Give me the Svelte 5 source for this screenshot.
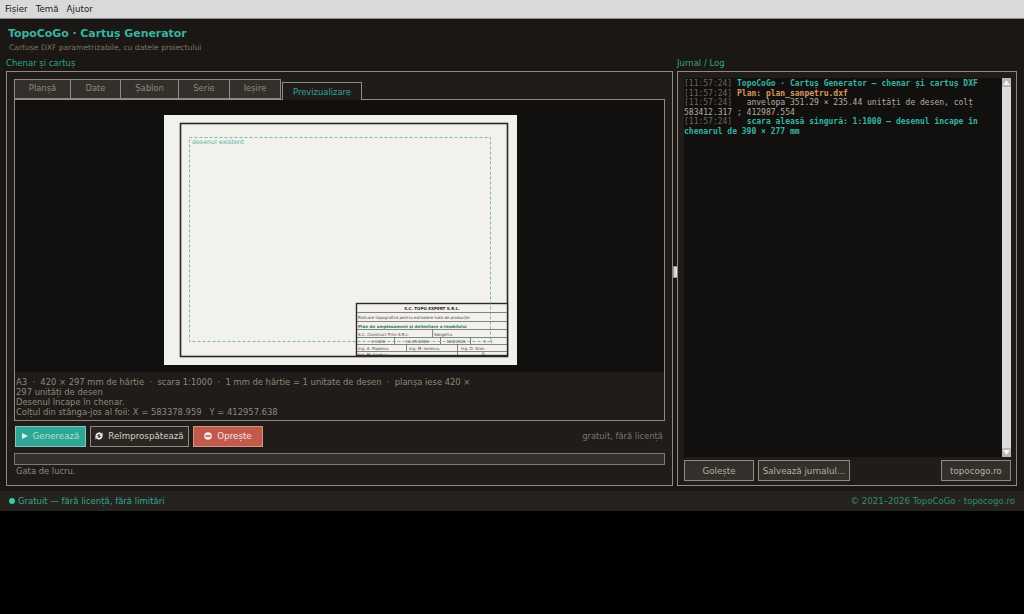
<script lang="ts">
  const tabs = ['Planșă', 'Date', 'Șablon', 'Serie', 'Ieșire', 'Previzualizare'];
  let activeTab = $state('Previzualizare');
</script>

<div class="window">
  <nav class="menubar">
    <span>Fișier</span>
    <span>Temă</span>
    <span>Ajutor</span>
  </nav>

  <header class="header">
    <h1>TopoCoGo · Cartuș Generator</h1>
    <p>Cartușe DXF parametrizabile, cu datele proiectului</p>
  </header>

  <main class="panes">
    <section class="pane left">
      <div class="pane-label">Chenar și cartuș</div>
      <div class="frame left-frame">
        <div class="tabs">
          {#each tabs as tab}
            <button class="tab" class:active={activeTab === tab} onclick={() => (activeTab = tab)}>{tab}</button>
          {/each}
        </div>
        <div class="tab-body">
          <div class="canvas">
            <svg class="sheet" width="353" height="250" viewBox="0 0 353 250">
              <rect x="16.500" y="8.500" width="327" height="233" fill="none" stroke="#2a2825" stroke-width="1.600" />
              <text x="28" y="29" class="note">desenul existent</text>

              <g class="block">
                <rect x="192.500" y="188.500" width="151" height="52" fill="#f3f1ec" stroke="#2a2825" stroke-width="1.400" />
                <line x1="193" y1="197.500" x2="343" y2="197.500" />
                <line x1="193" y1="206.500" x2="343" y2="206.500" />
                <line x1="193" y1="214.500" x2="343" y2="214.500" />
                <line x1="193" y1="222.500" x2="343" y2="222.500" />
                <line x1="193" y1="229.500" x2="343" y2="229.500" />
                <line x1="193" y1="236.500" x2="343" y2="236.500" />
                <line x1="268.500" y1="214" x2="268.500" y2="222" />
                <line x1="230.500" y1="222" x2="230.500" y2="229" />
                <line x1="276.500" y1="222" x2="276.500" y2="229" />
                <line x1="306.500" y1="222" x2="306.500" y2="229" />
                <line x1="242.500" y1="229" x2="242.500" y2="236" />
                <line x1="293.500" y1="229" x2="293.500" y2="240" />
                <text x="268" y="194.500" class="t c b">S.C. TOPO EXPERT S.R.L.</text>
                <text x="194" y="203.500" class="t">Ridicare topografică pentru extindere hală de producție</text>
                <text x="194" y="212.500" class="t b teal">Plan de amplasament și delimitare a imobilului</text>
                <text x="194" y="220.500" class="t">S.C. Construct Prim S.R.L.</text>
                <text x="270" y="220.500" class="t">Sângetru</text>
                <text x="214" y="228" class="t c">1:1000</text>
                <text x="253" y="228" class="t c">16-05-2026</text>
                <text x="292" y="228" class="t c">184/2026</text>
                <text x="324" y="228" class="t c">1 : 1</text>
                <text x="194" y="235" class="t">ing. A. Popescu</text>
                <text x="245" y="235" class="t">ing. M. Ionescu</text>
                <text x="297" y="235" class="t">ing. D. Stan</text>
                <text x="194" y="241" class="t">ing. M. Ionescu</text>
                <text x="318" y="240" class="t">0</text>
              </g>

              <rect x="25.500" y="22.500" width="301" height="204" fill="none" stroke="#3aa796" stroke-opacity="0.7" stroke-dasharray="3 2" />
            </svg>
          </div>
          <div class="info">
            <div class="info-text">A3 &nbsp;·&nbsp; 420 × 297 mm de hârtie &nbsp;·&nbsp; scara 1:1000 &nbsp;·&nbsp; 1 mm de hârtie = 1 unitate de desen &nbsp;·&nbsp; planșa iese 420 × 297 unități de desen</div>
            <div>Desenul încape în chenar.</div>
            <div>Colțul din stânga-jos al foii: X = 583378.959 &nbsp; Y = 412957.638</div>
          </div>
        </div>

        <div class="actions">
          <button class="btn primary"><span class="play"></span>Generează</button>
          <button class="btn plain">
            <svg width="8" height="8" viewBox="0 0 10 10"><path d="M.5 5a4.500 4.500 0 0 1 7.700-3.200L9.500.5v4.500H5l1.600-1.600A2.300 2.300 0 0 0 2.900 5zM9.500 5a4.500 4.500 0 0 1-7.700 3.200L.5 9.500V5H5L3.400 6.600A2.300 2.300 0 0 0 7.100 5z" fill="#e8e4dc" /></svg>
            Reîmprospătează
          </button>
          <button class="btn danger">
            <svg width="8" height="8" viewBox="0 0 10 10"><circle cx="5" cy="5" r="4.700" fill="#f3efe8" /><rect x="2" y="4" width="6" height="2" fill="#c25a4c" /></svg>
            Oprește
          </button>
          <span class="license">gratuit, fără licență</span>
        </div>
        <div class="progress"></div>
        <div class="status">Gata de lucru.</div>
      </div>
    </section>

    <div class="sash"><span></span></div>

    <section class="pane right">
      <div class="pane-label">Jurnal / Log</div>
      <div class="frame right-frame">
        <div class="log-wrap">
          <div class="log">
            <div><span class="ts">[11:57:24]</span> <span class="head">TopoCoGo · Cartuș Generator — chenar și cartuș DXF</span></div>
            <div><span class="ts">[11:57:24]</span> <span class="plan">Plan: plan_sanpetru.dxf</span></div>
            <div><span class="ts">[11:57:24]</span> <span class="normal">&nbsp; anvelopa 351.29 × 235.44 unități de desen, colț 583412.317 ; 412987.554</span></div>
            <div><span class="ts">[11:57:24]</span> <span class="head">&nbsp; scara aleasă singură: 1:1000 — desenul încape în chenarul de 390 × 277 mm</span></div>
          </div>
          <div class="scrollbar">
            <div class="arrow"><svg width="7" height="5" viewBox="0 0 7 5"><path d="M3.500 0 7 5H0z" fill="#f2f2f2" /></svg></div>
            <div class="thumb"></div>
            <div class="arrow"><svg width="7" height="5" viewBox="0 0 7 5"><path d="M3.500 5 7 0H0z" fill="#f2f2f2" /></svg></div>
          </div>
        </div>
        <div class="log-actions">
          <button class="btn log-btn clear">Golește</button>
          <button class="btn log-btn save">Salvează jurnalul...</button>
          <button class="btn log-btn site">topocogo.ro</button>
        </div>
      </div>
    </section>
  </main>

  <footer class="footer">
    <span class="free"><i class="dot"></i>Gratuit — fără licență, fără limitări</span>
    <span class="copy">© 2021–2026 TopoCoGo · topocogo.ro</span>
  </footer>
</div>

<style>
  :global(body) {
    margin: 0;
    background: #000;
  }

  .window {
    width: 1024px;
    height: 511px;
    display: flex;
    flex-direction: column;
    background: #1f1c19;
    font-family: 'DejaVu Sans', sans-serif;
    font-size: 8.400px;
    color: #8f887c;
  }

  .menubar {
    height: 19px;
    box-sizing: border-box;
    display: flex;
    align-items: center;
    gap: 8px;
    padding: 0 5px;
    background: #d9d9d9;
    border-bottom: 1px solid #8d8d8d;
    color: #1a1a1a;
    font-size: 8.700px;
  }

  .header {
    height: 38px;
    box-sizing: border-box;
    padding: 8px 8px 0;
    background: #1a1714;
  }

  .header h1 {
    margin: 0;
    font-size: 10.900px;
    line-height: 13px;
    font-weight: 700;
    color: #38b5a3;
  }

  .header p {
    margin: 3px 0 0 1px;
    font-size: 7.600px;
    line-height: 10px;
    color: #7d766b;
  }

  .panes {
    flex: 1;
    display: flex;
    padding: 0 7px 5px 6px;
    background: #1a1714;
    min-height: 0;
  }

  .pane {
    display: flex;
    flex-direction: column;
    min-width: 0;
  }

  .left {
    width: 667px;
  }

  .right {
    flex: 1;
  }

  .pane-label {
    height: 14px;
    line-height: 12px;
    font-size: 8.500px;
    color: #2fa593;
  }

  .frame {
    flex: 1;
    min-height: 0;
    box-sizing: border-box;
    border: 1px solid #8f8b83;
    background: #1f1c19;
    display: flex;
    flex-direction: column;
  }

  .left-frame {
    padding: 7px 7px 0;
  }

  .tabs {
    display: flex;
    align-items: flex-end;
    height: 21px;
    position: relative;
    z-index: 1;
    margin-bottom: -1px;
  }

  .tab {
    height: 20px;
    box-sizing: border-box;
    margin: 0 0 1px;
    padding: 0 0 2px;
    border: 1px solid #8f8b83;
    border-right-width: 0;
    background: #33302b;
    color: #8f887c;
    font: inherit;
  }

  .tab:nth-child(1) { width: 56px; }
  .tab:nth-child(2) { width: 50px; }
  .tab:nth-child(3) { width: 58px; }
  .tab:nth-child(4) { width: 51px; }
  .tab:nth-child(5) { width: 52px; border-right-width: 1px; }

  .tab.active {
    width: 80px;
    height: 18px;
    margin: 0 0 0 1px;
    padding: 0;
    border-right-width: 1px;
    border-bottom: 0;
    background: #1f1c19;
    color: #2fa593;
  }

  .tab-body {
    height: 322px;
    box-sizing: border-box;
    border: 1px solid #8f8b83;
    display: flex;
    flex-direction: column;
  }

  .canvas {
    height: 272px;
    flex: none;
    box-sizing: border-box;
    padding: 15px 0 0 149px;
    background: #12100e;
  }

  .sheet {
    display: block;
    background: #f3f1ec;
  }

  .note {
    font-size: 6.300px;
    fill: #3aa796;
    opacity: 0.8;
  }

  .block line {
    stroke: #6a6862;
    stroke-width: 0.800;
  }

  .t {
    font-size: 4px;
    fill: #4a4844;
  }

  .t.b {
    font-weight: 700;
    fill: #2a2825;
  }

  .t.c {
    text-anchor: middle;
  }

  .t.teal {
    font-size: 4.100px;
    fill: #1f7d6f;
  }

  .info {
    padding: 5px 1px 0;
    line-height: 10px;
    color: #8f887c;
  }

  .info-text {
    max-width: 460px;
  }

  .actions {
    display: flex;
    align-items: center;
    gap: 4px;
    height: 22px;
    margin-top: 4px;
    padding: 0 1px;
  }

  .btn {
    height: 21px;
    box-sizing: border-box;
    display: inline-flex;
    align-items: center;
    justify-content: center;
    gap: 5px;
    padding: 0 4px;
    border: 1px solid #8f8b83;
    font: inherit;
    font-size: 8.700px;
    background: #33302b;
    color: #cfc9be;
  }

  .primary {
    width: 71px;
    background: #2ea595;
    color: #b5e0d6;
    border-color: #85c7bb;
  }

  .play {
    width: 0;
    height: 0;
    border-left: 6px solid #dff2ec;
    border-top: 3.500px solid transparent;
    border-bottom: 3.500px solid transparent;
  }

  .plain {
    width: 99px;
    background: #2a2723;
    color: #d6d0c5;
  }

  .danger {
    width: 70px;
    background: #c25a4c;
    color: #f3e7e2;
    border-color: #d69086;
  }

  .license {
    margin-left: auto;
    padding-right: 1px;
    color: #7d766b;
  }

  .progress {
    height: 12px;
    box-sizing: border-box;
    margin-top: 6px;
    border: 1px solid #7d7970;
    background: #33302b;
  }

  .status {
    margin: 1px 0 0 2px;
    line-height: 11px;
    color: #8f887c;
  }

  .sash {
    width: 4px;
    display: flex;
    align-items: center;
    justify-content: center;
  }

  .sash span {
    width: 3px;
    height: 10px;
    flex: none;
    background: #dcdcdc;
    border: 1px solid #8d8d8d;
  }

  .right-frame {
    padding: 6px 5px 4px 6px;
  }

  .log-wrap {
    flex: 1;
    min-height: 0;
    display: flex;
    background: #12100e;
  }

  .log {
    flex: 1;
    min-width: 0;
    padding: 1px 0;
    font-family: 'DejaVu Sans Mono', monospace;
    font-size: 8px;
    line-height: 9.500px;
    color: #b5aea2;
  }

  .ts {
    color: #6d675d;
  }

  .head {
    color: #35b5a2;
    font-weight: 700;
  }

  .plan {
    color: #d69a62;
    font-weight: 700;
  }

  .scrollbar {
    width: 9px;
    display: flex;
    flex-direction: column;
    background: #dcdcdc;
  }

  .arrow {
    height: 9px;
    display: flex;
    align-items: center;
    justify-content: center;
    background: #b8b8b8;
  }

  .thumb {
    flex: 1;
    background: #dcdcdc;
  }

  .log-actions {
    display: flex;
    gap: 4px;
    padding-top: 3px;
    height: 21px;
  }

  .log-btn {
    height: 21px;
    padding: 0;
    background: #33302b;
    color: #b5aea2;
  }

  .clear {
    width: 70px;
  }

  .save {
    width: 92px;
  }

  .site {
    width: 70px;
    margin-left: auto;
  }

  .footer {
    height: 20px;
    box-sizing: border-box;
    display: flex;
    align-items: center;
    justify-content: space-between;
    padding: 0 9px;
    background: #26231f;
    color: #2fa593;
    font-size: 8.500px;
  }

  .free {
    display: flex;
    align-items: center;
    gap: 3px;
  }

  .dot {
    width: 6px;
    height: 6px;
    border-radius: 50%;
    background: #35c9b0;
  }

  .copy {
    color: #2d8c7d;
    font-size: 8.600px;
  }
</style>
